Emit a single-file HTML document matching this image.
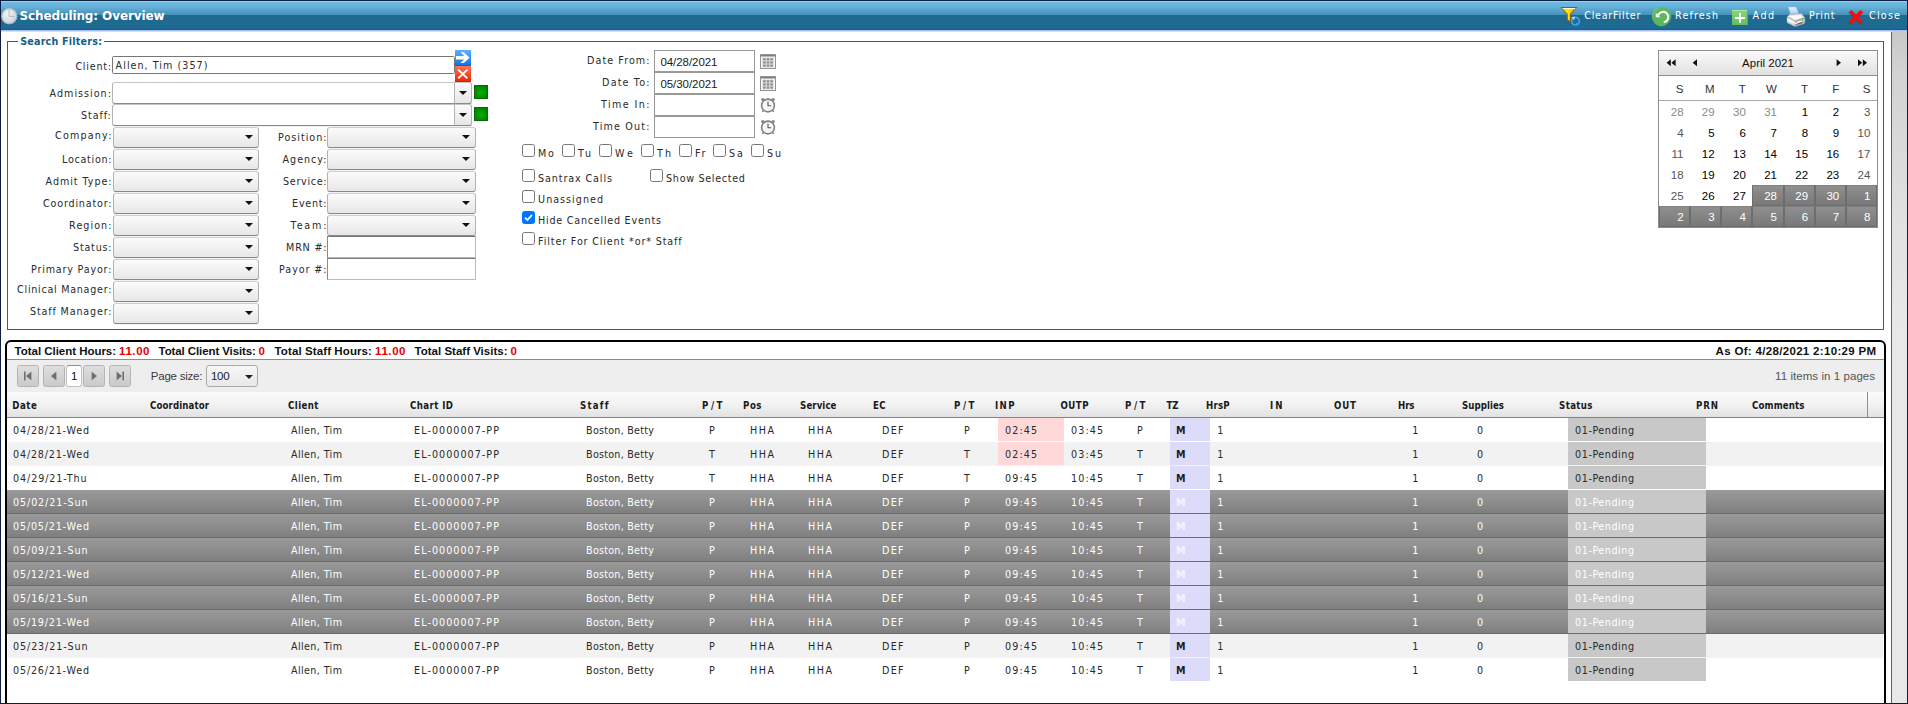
<!DOCTYPE html>
<html lang="en"><head><meta charset="utf-8"><title>Scheduling: Overview</title>
<style>
*{box-sizing:border-box;margin:0;padding:0}
html,body{width:1908px;height:704px;overflow:hidden;background:#fff}
body{position:relative;font-family:"DejaVu Sans", "Liberation Sans", sans-serif;font-size:10px;color:#2a2a2a}
.a{position:absolute;white-space:nowrap}
.v{font-family:"DejaVu Sans", "Liberation Sans", sans-serif}.vc{font-family:"DejaVu Sans Condensed", "DejaVu Sans", sans-serif}.s{font-family:"Liberation Sans", sans-serif}.b{font-weight:bold}
.win{left:0;top:0;width:1908px;height:704px;border:1px solid #0d1f3e;pointer-events:none;z-index:50}
.tb{left:1px;top:1px;width:1906px;height:30px;background:linear-gradient(#6cbae0 0,#68b4dc 4px,#4590b8 13px,#1e6a91 13px,#1e6a91 27px,#126087 27px,#126087 28px);border-top:1px solid #a8c6fc;border-bottom:1px solid #a8c0f8}
.fs{left:7px;top:41px;width:1877px;height:289px;border:1px solid #1b6a94}
.cb{width:13px;height:13px;border:1px solid #767676;border-radius:2.5px;background:#fff}
.cb.on{background:#0075ff;border-color:#0075ff}
.dd{height:21px;border:1px solid #b2b2b2;border-top-color:#cfcfcf;border-bottom-color:#888;border-radius:3px;background:linear-gradient(#fbfbfb,#e7e7e7);box-shadow:0 1px 0 rgba(0,0,0,.05)}
.dd i,.ar{position:absolute;width:0;height:0;border-left:4px solid transparent;border-right:4px solid transparent;border-top:4px solid #111}
.in{border:1px solid #8f8f8f;background:#fff}
</style></head>
<body>
<div class="a tb"></div>
<div class="a" style="left:1px;top:31px;width:1891px;height:1px;background:#dedede"></div>
<svg class="a" style="left:1px;top:8px" width="17" height="17" viewBox="0 0 17 17"><defs><radialGradient id="ck" cx=".4" cy=".35" r=".75"><stop offset="0" stop-color="#f4f6f8"/><stop offset=".7" stop-color="#d3d9de"/><stop offset="1" stop-color="#9aa3ab"/></radialGradient></defs><circle cx="8.3" cy="8.3" r="8" fill="url(#ck)"/><circle cx="8.3" cy="8.3" r="7.5" fill="none" stroke="#a9b1b8" stroke-width=".9"/><path d="M8.1 2.2V8.4H13.6" stroke="#9aa4ac" stroke-width=".9" fill="none" opacity=".8"/></svg>
<div class="a v b" style="top:9px;font-size:12px;line-height:14px;letter-spacing:-0.11px;left:19.5px;color:#fff;">Scheduling: Overview</div>
<div class="a fs"></div>
<div class="a" style="left:18px;top:38px;width:86px;height:8px;background:#fff"></div>
<div class="a v b" style="top:36px;font-size:9.6px;line-height:11px;letter-spacing:0.20px;left:20.2px;color:#12608a;">Search Filters:</div>
<svg class="a" style="left:1560px;top:6px" width="22" height="22" viewBox="0 0 22 22">
<defs><linearGradient id="fn" x1="0" y1="0" x2="1" y2="0"><stop offset="0" stop-color="#ffd800"/><stop offset=".45" stop-color="#ffe600"/><stop offset="1" stop-color="#ff8e0a"/></linearGradient></defs>
<path d="M1.2 1.5H16.8L10.4 8V15.8L7.2 13.4V8Z" fill="url(#fn)" stroke="#8c4c00" stroke-width=".9" stroke-linejoin="round"/>
<path d="M2.6 2.6H15.4" stroke="#fff" stroke-width=".9"/>
<circle cx="15.5" cy="15.2" r="3.8" fill="none" stroke="#4aa0ea" stroke-width="1.7"/>
<path d="M11 11.6l3.8-1-.6 3.6z" fill="#a6dcff"/><path d="M19.6 18.8l-3.8 1 .4-3.6z" fill="#1e9cff"/>
</svg>
<div class="a v" style="top:10px;font-size:9.6px;line-height:11px;letter-spacing:0.73px;left:1584.3px;color:#fff;">ClearFilter</div>
<svg class="a" style="left:1651px;top:6px" width="21" height="21" viewBox="0 0 21 21">
<defs><linearGradient id="rf" x1="0" y1="0" x2="1" y2="1"><stop offset="0" stop-color="#8fdc88"/><stop offset=".3" stop-color="#5cb85c"/><stop offset=".75" stop-color="#58b458"/><stop offset="1" stop-color="#2f742f"/></linearGradient></defs>
<circle cx="10.6" cy="10.7" r="9.2" fill="#5cb85c" stroke="url(#rf)" stroke-width="1.1"/>
<path d="M7.6 8.4A5.2 5.2 0 1 1 13.6 16" fill="none" stroke="#fff" stroke-width="2.1" stroke-linecap="round"/>
<path d="M4.8 6.8V11.2H9.4Z" fill="#fff"/>
</svg>
<div class="a v" style="top:10px;font-size:9.6px;line-height:11px;letter-spacing:1.11px;left:1675.1px;color:#fff;">Refresh</div>
<svg class="a" style="left:1731px;top:9px" width="18" height="18" viewBox="0 0 18 18">
<defs><linearGradient id="ad" x1="0" y1="0" x2="0" y2="1"><stop offset="0" stop-color="#8cd483"/><stop offset="1" stop-color="#66bb5e"/></linearGradient></defs>
<rect x="1" y="1" width="16" height="15" fill="url(#ad)"/><path d="M1 1.4H17" stroke="#b4f0a8" stroke-width=".8"/><path d="M16.6 1V16" stroke="#4f9f42" stroke-width=".8"/>
<path d="M9 4.1V13.9M4.1 9H13.9" stroke="#fff" stroke-width="1.9"/>
</svg>
<div class="a v" style="top:10px;font-size:9.6px;line-height:11px;letter-spacing:1.41px;left:1752.6px;color:#fff;">Add</div>
<svg class="a" style="left:1786px;top:5px" width="20" height="23" viewBox="0 0 20 23">
<defs><linearGradient id="pp" x1="0" y1="0" x2="0" y2="1"><stop offset="0" stop-color="#f2f1ff"/><stop offset="1" stop-color="#a9c9ff"/></linearGradient>
<linearGradient id="pf" x1="0" y1="0" x2="0" y2="1"><stop offset="0" stop-color="#fafafa"/><stop offset="1" stop-color="#cfcfcf"/></linearGradient></defs>
<path d="M2.3 2H10.1L12.8 8.6L4.4 9.2Z" fill="url(#pp)" stroke="#9fb4dd" stroke-width=".5"/>
<path d="M1 12L3.6 9.4L15.4 8.7L18.8 12.6L9.4 16.2Z" fill="#e6e6e6" stroke="#a9a9a9" stroke-width=".5"/>
<path d="M3.2 11.2L14.6 10.2L16.4 12.2L9.2 14.6Z" fill="#fbfbfb"/>
<path d="M1 12L9.4 16.2L9.2 21.8L1 17.6Z" fill="url(#pf)" stroke="#9b9b9b" stroke-width=".5"/>
<path d="M9.4 16.2L18.8 12.6V18.4L9.2 21.8Z" fill="#c4c4c4" stroke="#8e8e8e" stroke-width=".5"/>
<path d="M1.2 14.4L9.3 18.4L18.6 15" fill="none" stroke="#fff" stroke-width="1.1" opacity=".9"/>
<path d="M10.6 19.6L16.6 17.4" stroke="#555" stroke-width="1.1"/>
<path d="M9.6 20.6L12.2 19.7" stroke="#7f8fe0" stroke-width="1"/>
<circle cx="16.7" cy="15.2" r=".9" fill="#5fc03c"/>
</svg>
<div class="a v" style="top:10px;font-size:9.6px;line-height:11px;letter-spacing:0.83px;left:1809.1px;color:#fff;">Print</div>
<svg class="a" style="left:1847px;top:9px" width="18" height="17" viewBox="0 0 18 17">
<path d="M3.2 2.05L14.9 13.75M14.9 2.05L3.2 13.75" stroke="#8a0a0a" stroke-width="3.4" opacity=".55" transform="translate(-.35 .5)"/>
<path d="M3.2 2.05L14.9 13.75M14.9 2.05L3.2 13.75" stroke="#ff0a0a" stroke-width="3.3"/>
</svg>
<div class="a v" style="top:10px;font-size:9.6px;line-height:11px;letter-spacing:1.19px;left:1869.1px;color:#fff;">Close</div>
<div class="a" style="left:1892px;top:31px;width:15px;height:672px;background:linear-gradient(#c8c8c8,#d2d2d2 40px,#e2e2e2 200px,#e8e8e8 300px)"></div>
<div class="a" style="left:1891px;top:32px;width:1px;height:671px;background:#2a7198"></div>
<div class="a v" style="top:61px;font-size:9.6px;line-height:11px;letter-spacing:0.77px;left:75.4px;">Client:</div>
<div class="a v" style="top:88px;font-size:9.6px;line-height:11px;letter-spacing:1.00px;left:49.6px;">Admission:</div>
<div class="a v" style="top:110px;font-size:9.6px;line-height:11px;letter-spacing:0.86px;left:81.1px;">Staff:</div>
<div class="a v" style="top:130px;font-size:9.6px;line-height:11px;letter-spacing:1.17px;left:55.1px;">Company:</div>
<div class="a v" style="top:154px;font-size:9.6px;line-height:11px;letter-spacing:0.70px;left:62.1px;">Location:</div>
<div class="a v" style="top:176px;font-size:9.6px;line-height:11px;letter-spacing:0.93px;left:45.6px;">Admit Type:</div>
<div class="a v" style="top:198px;font-size:9.6px;line-height:11px;letter-spacing:0.80px;left:43.1px;">Coordinator:</div>
<div class="a v" style="top:220px;font-size:9.6px;line-height:11px;letter-spacing:1.05px;left:69.1px;">Region:</div>
<div class="a v" style="top:242px;font-size:9.6px;line-height:11px;letter-spacing:0.76px;left:73.1px;">Status:</div>
<div class="a v" style="top:264px;font-size:9.6px;line-height:11px;letter-spacing:0.80px;left:31.1px;">Primary Payor:</div>
<div class="a v" style="top:284px;font-size:9.6px;line-height:11px;letter-spacing:0.72px;left:17.1px;">Clinical Manager:</div>
<div class="a v" style="top:306px;font-size:9.6px;line-height:11px;letter-spacing:0.83px;left:30.1px;">Staff Manager:</div>
<div class="a v" style="top:132px;font-size:9.6px;line-height:11px;letter-spacing:0.97px;left:278.1px;">Position:</div>
<div class="a v" style="top:154px;font-size:9.6px;line-height:11px;letter-spacing:0.96px;left:282.6px;">Agency:</div>
<div class="a v" style="top:176px;font-size:9.6px;line-height:11px;letter-spacing:0.67px;left:283.1px;">Service:</div>
<div class="a v" style="top:198px;font-size:9.6px;line-height:11px;letter-spacing:0.73px;left:292.1px;">Event:</div>
<div class="a v" style="top:220px;font-size:9.6px;line-height:11px;letter-spacing:1.82px;left:290.6px;">Team:</div>
<div class="a v" style="top:242px;font-size:9.6px;line-height:11px;letter-spacing:0.79px;left:286.1px;">MRN #:</div>
<div class="a v" style="top:264px;font-size:9.6px;line-height:11px;letter-spacing:0.90px;left:279.1px;">Payor #:</div>
<div class="a in" style="left:112px;top:56px;width:343px;height:18px;border-color:#767676;border-radius:1.5px"></div>
<div class="a v" style="top:60px;font-size:9.6px;line-height:11px;letter-spacing:1.03px;left:115.6px;">Allen, Tim (357)</div>
<svg class="a" style="left:455px;top:50px" width="16" height="32" viewBox="0 0 16 32">
<defs><linearGradient id="bl" x1="0" y1="0" x2="0" y2="1"><stop offset="0" stop-color="#5cb0ff"/><stop offset="1" stop-color="#0e70e2"/></linearGradient>
<linearGradient id="rd" x1="0" y1="0" x2="0" y2="1"><stop offset="0" stop-color="#ff7354"/><stop offset="1" stop-color="#ea2406"/></linearGradient></defs>
<rect width="16" height="16" fill="url(#bl)"/><path d="M0 15.6H16" stroke="#0b57be" stroke-width=".8"/><path d="M.9 6H9.2L5.7 2.2H8.8L14.6 7.7L8.8 12.9H5.4L9.2 9.4H.9Z" fill="#fff"/>
<rect y="16" width="16" height="16" fill="url(#rd)"/><path d="M3.2 19.6L12.4 28.4M12.4 19.6L3.2 28.4" stroke="#fff" stroke-width="1.9"/><path d="M0 31.6H16" stroke="#d01c00" stroke-width=".8"/>
</svg>
<div class="a" style="left:112px;top:82px;width:360px;height:22px;border:1px solid #b4b4b4;border-top-color:#c4c4c4;border-bottom-color:#8a8a8a;border-radius:3px;background:#fff;box-shadow:0 1px 0 rgba(0,0,0,.06)"></div>
<div class="a" style="left:454px;top:82px;width:18px;height:22px;border:1px solid #b4b4b4;border-top-color:#c4c4c4;border-bottom-color:#8a8a8a;border-radius:0 3px 3px 0;background:linear-gradient(#fbfbfb,#e6e6e6)"><i class="ar" style="left:4px;top:8px"></i></div>
<div class="a" style="left:112px;top:104px;width:360px;height:22px;border:1px solid #b4b4b4;border-top-color:#c4c4c4;border-bottom-color:#8a8a8a;border-radius:3px;background:#fff;box-shadow:0 1px 0 rgba(0,0,0,.06)"></div>
<div class="a" style="left:454px;top:104px;width:18px;height:22px;border:1px solid #b4b4b4;border-top-color:#c4c4c4;border-bottom-color:#8a8a8a;border-radius:0 3px 3px 0;background:linear-gradient(#fbfbfb,#e6e6e6)"><i class="ar" style="left:4px;top:8px"></i></div>
<div class="a" style="left:474px;top:85px;width:14px;height:14px;border:1px solid #0a6a0a;background:radial-gradient(circle at 50% 55%,#0aae0a,#008a00 70%,#007c00)"></div>
<div class="a" style="left:474px;top:107px;width:14px;height:14px;border:1px solid #0a6a0a;background:radial-gradient(circle at 50% 55%,#0aae0a,#008a00 70%,#007c00)"></div>
<div class="a dd" style="left:113px;top:127px;width:146px;height:21px"><i style="right:5px;top:7px"></i></div>
<div class="a dd" style="left:113px;top:149px;width:146px;height:21px"><i style="right:5px;top:7px"></i></div>
<div class="a dd" style="left:113px;top:171px;width:146px;height:21px"><i style="right:5px;top:7px"></i></div>
<div class="a dd" style="left:113px;top:193px;width:146px;height:21px"><i style="right:5px;top:7px"></i></div>
<div class="a dd" style="left:113px;top:215px;width:146px;height:21px"><i style="right:5px;top:7px"></i></div>
<div class="a dd" style="left:113px;top:237px;width:146px;height:21px"><i style="right:5px;top:7px"></i></div>
<div class="a dd" style="left:113px;top:259px;width:146px;height:21px"><i style="right:5px;top:7px"></i></div>
<div class="a dd" style="left:113px;top:281px;width:146px;height:21px"><i style="right:5px;top:7px"></i></div>
<div class="a dd" style="left:113px;top:303px;width:146px;height:21px"><i style="right:5px;top:7px"></i></div>
<div class="a dd" style="left:327px;top:127px;width:149px;height:21px"><i style="right:5px;top:7px"></i></div>
<div class="a dd" style="left:327px;top:149px;width:149px;height:21px"><i style="right:5px;top:7px"></i></div>
<div class="a dd" style="left:327px;top:171px;width:149px;height:21px"><i style="right:5px;top:7px"></i></div>
<div class="a dd" style="left:327px;top:193px;width:149px;height:21px"><i style="right:5px;top:7px"></i></div>
<div class="a dd" style="left:327px;top:215px;width:149px;height:21px"><i style="right:5px;top:7px"></i></div>
<div class="a" style="left:327px;top:236px;width:149px;height:22px;background:#fff;border:1px solid #b9b9b9;border-top-color:#7a7a7a;border-left-color:#8a8a8a"></div>
<div class="a" style="left:327px;top:258px;width:149px;height:22px;background:#fff;border:1px solid #b9b9b9;border-top-color:#7a7a7a;border-left-color:#8a8a8a"></div>
<div class="a v" style="top:55px;font-size:9.6px;line-height:11px;letter-spacing:1.04px;left:587.1px;">Date From:</div>
<div class="a v" style="top:77px;font-size:9.6px;line-height:11px;letter-spacing:1.15px;left:602.1px;">Date To:</div>
<div class="a v" style="top:99px;font-size:9.6px;line-height:11px;letter-spacing:1.39px;left:601.1px;">Time In:</div>
<div class="a v" style="top:121px;font-size:9.6px;line-height:11px;letter-spacing:1.15px;left:593.1px;">Time Out:</div>
<div class="a in" style="left:654px;top:50px;width:101px;height:22px;border-color:#999"></div>
<div class="a in" style="left:654px;top:72px;width:101px;height:22px;border-color:#999"></div>
<div class="a in" style="left:654px;top:94px;width:101px;height:22px;border-color:#999"></div>
<div class="a in" style="left:654px;top:116px;width:101px;height:22px;border-color:#999"></div>
<div class="a s" style="top:56px;font-size:11.5px;line-height:12px;letter-spacing:-0.05px;left:660.4px;color:#1a1a1a;">04/28/2021</div>
<div class="a s" style="top:78px;font-size:11.5px;line-height:12px;letter-spacing:-0.05px;left:660.4px;color:#1a1a1a;">05/30/2021</div>
<svg class="a" style="left:760px;top:54px" width="16" height="15" viewBox="0 0 16 15">
<rect x=".5" y=".5" width="15" height="14" fill="#f6f6f6" stroke="#939393"/><rect x="1" y="1" width="14" height="1.5" fill="#7e7e7e"/>
<rect x="2.4" y="3.6" width="11.2" height="9.8" fill="#d9d9d9"/><g fill="#8f8f8f"><rect x="3.1" y="4.2" width="2.5" height="2.1"/><rect x="6.75" y="4.2" width="2.5" height="2.1"/><rect x="10.4" y="4.2" width="2.5" height="2.1"/><rect x="3.1" y="7.4" width="2.5" height="2.1"/><rect x="6.75" y="7.4" width="2.5" height="2.1"/><rect x="10.4" y="7.4" width="2.5" height="2.1"/><rect x="3.1" y="10.6" width="2.5" height="2.1"/><rect x="6.75" y="10.6" width="2.5" height="2.1"/><rect x="10.4" y="10.6" width="2.5" height="2.1"/></g></svg>
<svg class="a" style="left:760px;top:76px" width="16" height="15" viewBox="0 0 16 15">
<rect x=".5" y=".5" width="15" height="14" fill="#f6f6f6" stroke="#939393"/><rect x="1" y="1" width="14" height="1.5" fill="#7e7e7e"/>
<rect x="2.4" y="3.6" width="11.2" height="9.8" fill="#d9d9d9"/><g fill="#8f8f8f"><rect x="3.1" y="4.2" width="2.5" height="2.1"/><rect x="6.75" y="4.2" width="2.5" height="2.1"/><rect x="10.4" y="4.2" width="2.5" height="2.1"/><rect x="3.1" y="7.4" width="2.5" height="2.1"/><rect x="6.75" y="7.4" width="2.5" height="2.1"/><rect x="10.4" y="7.4" width="2.5" height="2.1"/><rect x="3.1" y="10.6" width="2.5" height="2.1"/><rect x="6.75" y="10.6" width="2.5" height="2.1"/><rect x="10.4" y="10.6" width="2.5" height="2.1"/></g></svg>
<svg class="a" style="left:760px;top:97px" width="16" height="16" viewBox="0 0 16 16">
<circle cx="2.8" cy="2.6" r="1.7" fill="#8a8a8a"/><circle cx="13.2" cy="2.6" r="1.7" fill="#8a8a8a"/>
<path d="M3.6 13L2.4 15M12.4 13L13.6 15" stroke="#7a7a7a" stroke-width="1.4"/>
<circle cx="8" cy="8.5" r="6.4" fill="#f7f7f7" stroke="#808080" stroke-width="1.6"/>
<path d="M8 4.6V8.8H11.2" stroke="#555" stroke-width="1.1" fill="none"/></svg>
<svg class="a" style="left:760px;top:119px" width="16" height="16" viewBox="0 0 16 16">
<circle cx="2.8" cy="2.6" r="1.7" fill="#8a8a8a"/><circle cx="13.2" cy="2.6" r="1.7" fill="#8a8a8a"/>
<path d="M3.6 13L2.4 15M12.4 13L13.6 15" stroke="#7a7a7a" stroke-width="1.4"/>
<circle cx="8" cy="8.5" r="6.4" fill="#f7f7f7" stroke="#808080" stroke-width="1.6"/>
<path d="M8 4.6V8.8H11.2" stroke="#555" stroke-width="1.1" fill="none"/></svg>
<div class="a cb" style="left:522px;top:144px"></div>
<div class="a v" style="top:147.5px;font-size:9.6px;line-height:11px;letter-spacing:1.74px;left:538.1px;">Mo</div>
<div class="a cb" style="left:562px;top:144px"></div>
<div class="a v" style="top:147.5px;font-size:9.6px;line-height:11px;letter-spacing:2.41px;left:578.1px;">Tu</div>
<div class="a cb" style="left:599px;top:144px"></div>
<div class="a v" style="top:147.5px;font-size:9.6px;line-height:11px;letter-spacing:3.06px;left:615.1px;">We</div>
<div class="a cb" style="left:641px;top:144px"></div>
<div class="a v" style="top:147.5px;font-size:9.6px;line-height:11px;letter-spacing:1.95px;left:657.1px;">Th</div>
<div class="a cb" style="left:679px;top:144px"></div>
<div class="a v" style="top:147.5px;font-size:9.6px;line-height:11px;letter-spacing:1.63px;left:695.1px;">Fr</div>
<div class="a cb" style="left:713px;top:144px"></div>
<div class="a v" style="top:147.5px;font-size:9.6px;line-height:11px;letter-spacing:1.92px;left:729.1px;">Sa</div>
<div class="a cb" style="left:751px;top:144px"></div>
<div class="a v" style="top:147.5px;font-size:9.6px;line-height:11px;letter-spacing:1.72px;left:767.1px;">Su</div>
<div class="a cb" style="left:522px;top:169px"></div>
<div class="a v" style="top:173px;font-size:9.6px;line-height:11px;letter-spacing:0.88px;left:538.1px;">Santrax Calls</div>
<div class="a cb" style="left:650px;top:169px"></div>
<div class="a v" style="top:173px;font-size:9.6px;line-height:11px;letter-spacing:0.69px;left:666.1px;">Show Selected</div>
<div class="a cb" style="left:522px;top:190px"></div>
<div class="a v" style="top:194px;font-size:9.6px;line-height:11px;letter-spacing:1.01px;left:538.1px;">Unassigned</div>
<div class="a cb on" style="left:522px;top:211px"><svg width="11" height="11" viewBox="0 0 11 11" style="display:block"><path d="M2 5.6L4.4 8L9 2.8" fill="none" stroke="#fff" stroke-width="1.8"/></svg></div>
<div class="a v" style="top:215px;font-size:9.6px;line-height:11px;letter-spacing:0.76px;left:538.1px;">Hide Cancelled Events</div>
<div class="a cb" style="left:522px;top:232px"></div>
<div class="a v" style="top:236px;font-size:9.6px;line-height:11px;letter-spacing:0.85px;left:538.1px;">Filter For Client *or* Staff</div>
<div class="a" style="left:1658px;top:50px;width:220px;height:178px;border:1px solid #8c8c8c;background:#fff"></div>
<div class="a" style="left:1658px;top:50px;width:220px;height:26px;border:1px solid #8f8f8f;background:linear-gradient(#fafafa,#e1e1e1)"></div>
<div class="a s" style="left:1658px;top:56px;width:220px;text-align:center;font-size:11.5px;line-height:14px;color:#111">April 2021</div>
<svg class="a" style="left:1658px;top:50px" width="220" height="26" viewBox="0 0 220 26"><g fill="#111">
<path d="M12.8 9.3V16.3L8.6 12.8ZM17.6 9.3V16.3L13.4 12.8Z"/><path d="M39 9.3V16.3L34.6 12.8Z"/>
<path d="M178.6 9.3V16.3L183 12.8Z"/><path d="M200 9.3V16.3L204.2 12.8ZM204.8 9.3V16.3L209 12.8Z"/></g></svg>
<div class="a" style="left:1659px;top:100px;width:218px;height:1px;background:#a8a8a8"></div>
<div class="a s" style="left:1659.00px;top:78px;width:31.14px;height:21px;text-align:right;padding-right:6.6px;font-size:11.5px;line-height:22px;color:#333;">S</div>
<div class="a s" style="left:1690.14px;top:78px;width:31.14px;height:21px;text-align:right;padding-right:6.6px;font-size:11.5px;line-height:22px;color:#333;">M</div>
<div class="a s" style="left:1721.29px;top:78px;width:31.14px;height:21px;text-align:right;padding-right:6.6px;font-size:11.5px;line-height:22px;color:#333;">T</div>
<div class="a s" style="left:1752.43px;top:78px;width:31.14px;height:21px;text-align:right;padding-right:6.6px;font-size:11.5px;line-height:22px;color:#333;">W</div>
<div class="a s" style="left:1783.57px;top:78px;width:31.14px;height:21px;text-align:right;padding-right:6.6px;font-size:11.5px;line-height:22px;color:#333;">T</div>
<div class="a s" style="left:1814.71px;top:78px;width:31.14px;height:21px;text-align:right;padding-right:6.6px;font-size:11.5px;line-height:22px;color:#333;">F</div>
<div class="a s" style="left:1845.86px;top:78px;width:31.14px;height:21px;text-align:right;padding-right:6.6px;font-size:11.5px;line-height:22px;color:#333;">S</div>
<div class="a s" style="left:1659.00px;top:101px;width:31.14px;height:21px;text-align:right;padding-right:6.6px;font-size:11.5px;line-height:22px;color:#8a8a8a;">28</div>
<div class="a s" style="left:1690.14px;top:101px;width:31.14px;height:21px;text-align:right;padding-right:6.6px;font-size:11.5px;line-height:22px;color:#8a8a8a;">29</div>
<div class="a s" style="left:1721.29px;top:101px;width:31.14px;height:21px;text-align:right;padding-right:6.6px;font-size:11.5px;line-height:22px;color:#8a8a8a;">30</div>
<div class="a s" style="left:1752.43px;top:101px;width:31.14px;height:21px;text-align:right;padding-right:6.6px;font-size:11.5px;line-height:22px;color:#8a8a8a;">31</div>
<div class="a s" style="left:1783.57px;top:101px;width:31.14px;height:21px;text-align:right;padding-right:6.6px;font-size:11.5px;line-height:22px;color:#000;">1</div>
<div class="a s" style="left:1814.71px;top:101px;width:31.14px;height:21px;text-align:right;padding-right:6.6px;font-size:11.5px;line-height:22px;color:#000;">2</div>
<div class="a s" style="left:1845.86px;top:101px;width:31.14px;height:21px;text-align:right;padding-right:6.6px;font-size:11.5px;line-height:22px;color:#555;">3</div>
<div class="a s" style="left:1659.00px;top:122px;width:31.14px;height:21px;text-align:right;padding-right:6.6px;font-size:11.5px;line-height:22px;color:#555;">4</div>
<div class="a s" style="left:1690.14px;top:122px;width:31.14px;height:21px;text-align:right;padding-right:6.6px;font-size:11.5px;line-height:22px;color:#000;">5</div>
<div class="a s" style="left:1721.29px;top:122px;width:31.14px;height:21px;text-align:right;padding-right:6.6px;font-size:11.5px;line-height:22px;color:#000;">6</div>
<div class="a s" style="left:1752.43px;top:122px;width:31.14px;height:21px;text-align:right;padding-right:6.6px;font-size:11.5px;line-height:22px;color:#000;">7</div>
<div class="a s" style="left:1783.57px;top:122px;width:31.14px;height:21px;text-align:right;padding-right:6.6px;font-size:11.5px;line-height:22px;color:#000;">8</div>
<div class="a s" style="left:1814.71px;top:122px;width:31.14px;height:21px;text-align:right;padding-right:6.6px;font-size:11.5px;line-height:22px;color:#000;">9</div>
<div class="a s" style="left:1845.86px;top:122px;width:31.14px;height:21px;text-align:right;padding-right:6.6px;font-size:11.5px;line-height:22px;color:#555;">10</div>
<div class="a s" style="left:1659.00px;top:143px;width:31.14px;height:21px;text-align:right;padding-right:6.6px;font-size:11.5px;line-height:22px;color:#555;">11</div>
<div class="a s" style="left:1690.14px;top:143px;width:31.14px;height:21px;text-align:right;padding-right:6.6px;font-size:11.5px;line-height:22px;color:#000;">12</div>
<div class="a s" style="left:1721.29px;top:143px;width:31.14px;height:21px;text-align:right;padding-right:6.6px;font-size:11.5px;line-height:22px;color:#000;">13</div>
<div class="a s" style="left:1752.43px;top:143px;width:31.14px;height:21px;text-align:right;padding-right:6.6px;font-size:11.5px;line-height:22px;color:#000;">14</div>
<div class="a s" style="left:1783.57px;top:143px;width:31.14px;height:21px;text-align:right;padding-right:6.6px;font-size:11.5px;line-height:22px;color:#000;">15</div>
<div class="a s" style="left:1814.71px;top:143px;width:31.14px;height:21px;text-align:right;padding-right:6.6px;font-size:11.5px;line-height:22px;color:#000;">16</div>
<div class="a s" style="left:1845.86px;top:143px;width:31.14px;height:21px;text-align:right;padding-right:6.6px;font-size:11.5px;line-height:22px;color:#555;">17</div>
<div class="a s" style="left:1659.00px;top:164px;width:31.14px;height:21px;text-align:right;padding-right:6.6px;font-size:11.5px;line-height:22px;color:#555;">18</div>
<div class="a s" style="left:1690.14px;top:164px;width:31.14px;height:21px;text-align:right;padding-right:6.6px;font-size:11.5px;line-height:22px;color:#000;">19</div>
<div class="a s" style="left:1721.29px;top:164px;width:31.14px;height:21px;text-align:right;padding-right:6.6px;font-size:11.5px;line-height:22px;color:#000;">20</div>
<div class="a s" style="left:1752.43px;top:164px;width:31.14px;height:21px;text-align:right;padding-right:6.6px;font-size:11.5px;line-height:22px;color:#000;">21</div>
<div class="a s" style="left:1783.57px;top:164px;width:31.14px;height:21px;text-align:right;padding-right:6.6px;font-size:11.5px;line-height:22px;color:#000;">22</div>
<div class="a s" style="left:1814.71px;top:164px;width:31.14px;height:21px;text-align:right;padding-right:6.6px;font-size:11.5px;line-height:22px;color:#000;">23</div>
<div class="a s" style="left:1845.86px;top:164px;width:31.14px;height:21px;text-align:right;padding-right:6.6px;font-size:11.5px;line-height:22px;color:#555;">24</div>
<div class="a s" style="left:1659.00px;top:185px;width:31.14px;height:21px;text-align:right;padding-right:6.6px;font-size:11.5px;line-height:22px;color:#555;">25</div>
<div class="a s" style="left:1690.14px;top:185px;width:31.14px;height:21px;text-align:right;padding-right:6.6px;font-size:11.5px;line-height:22px;color:#000;">26</div>
<div class="a s" style="left:1721.29px;top:185px;width:31.14px;height:21px;text-align:right;padding-right:6.6px;font-size:11.5px;line-height:22px;color:#000;">27</div>
<div class="a s" style="left:1752.43px;top:185px;width:31.14px;height:21px;text-align:right;padding-right:6.6px;font-size:11.5px;line-height:22px;color:#fff;background:linear-gradient(#8f8f8f,#787878);border:1px solid #6d6d6d;border-top-color:#808080;padding-right:5.6px;line-height:20px;">28</div>
<div class="a s" style="left:1783.57px;top:185px;width:31.14px;height:21px;text-align:right;padding-right:6.6px;font-size:11.5px;line-height:22px;color:#fff;background:linear-gradient(#8f8f8f,#787878);border:1px solid #6d6d6d;border-top-color:#808080;padding-right:5.6px;line-height:20px;">29</div>
<div class="a s" style="left:1814.71px;top:185px;width:31.14px;height:21px;text-align:right;padding-right:6.6px;font-size:11.5px;line-height:22px;color:#fff;background:linear-gradient(#8f8f8f,#787878);border:1px solid #6d6d6d;border-top-color:#808080;padding-right:5.6px;line-height:20px;">30</div>
<div class="a s" style="left:1845.86px;top:185px;width:31.14px;height:21px;text-align:right;padding-right:6.6px;font-size:11.5px;line-height:22px;color:#fff;background:linear-gradient(#8f8f8f,#787878);border:1px solid #6d6d6d;border-top-color:#808080;padding-right:5.6px;line-height:20px;">1</div>
<div class="a s" style="left:1659.00px;top:206px;width:31.14px;height:21px;text-align:right;padding-right:6.6px;font-size:11.5px;line-height:22px;color:#fff;background:linear-gradient(#8f8f8f,#787878);border:1px solid #6d6d6d;border-top-color:#808080;padding-right:5.6px;line-height:20px;">2</div>
<div class="a s" style="left:1690.14px;top:206px;width:31.14px;height:21px;text-align:right;padding-right:6.6px;font-size:11.5px;line-height:22px;color:#fff;background:linear-gradient(#8f8f8f,#787878);border:1px solid #6d6d6d;border-top-color:#808080;padding-right:5.6px;line-height:20px;">3</div>
<div class="a s" style="left:1721.29px;top:206px;width:31.14px;height:21px;text-align:right;padding-right:6.6px;font-size:11.5px;line-height:22px;color:#fff;background:linear-gradient(#8f8f8f,#787878);border:1px solid #6d6d6d;border-top-color:#808080;padding-right:5.6px;line-height:20px;">4</div>
<div class="a s" style="left:1752.43px;top:206px;width:31.14px;height:21px;text-align:right;padding-right:6.6px;font-size:11.5px;line-height:22px;color:#fff;background:linear-gradient(#8f8f8f,#787878);border:1px solid #6d6d6d;border-top-color:#808080;padding-right:5.6px;line-height:20px;">5</div>
<div class="a s" style="left:1783.57px;top:206px;width:31.14px;height:21px;text-align:right;padding-right:6.6px;font-size:11.5px;line-height:22px;color:#fff;background:linear-gradient(#8f8f8f,#787878);border:1px solid #6d6d6d;border-top-color:#808080;padding-right:5.6px;line-height:20px;">6</div>
<div class="a s" style="left:1814.71px;top:206px;width:31.14px;height:21px;text-align:right;padding-right:6.6px;font-size:11.5px;line-height:22px;color:#fff;background:linear-gradient(#8f8f8f,#787878);border:1px solid #6d6d6d;border-top-color:#808080;padding-right:5.6px;line-height:20px;">7</div>
<div class="a s" style="left:1845.86px;top:206px;width:31.14px;height:21px;text-align:right;padding-right:6.6px;font-size:11.5px;line-height:22px;color:#fff;background:linear-gradient(#8f8f8f,#787878);border:1px solid #6d6d6d;border-top-color:#808080;padding-right:5.6px;line-height:20px;">8</div>
<div class="a" style="left:5px;top:340px;width:1881px;height:380px;border:2px solid #000;border-radius:6px 6px 0 0;background:#fff"></div>
<div class="a s b" style="top:345px;font-size:11.5px;line-height:12px;letter-spacing:-0.03px;left:14.6px;color:#111;">Total Client Hours:</div>
<div class="a s b" style="top:345px;font-size:11.5px;line-height:12px;letter-spacing:0.56px;left:119.1px;color:#e00000;">11.00</div>
<div class="a s b" style="top:345px;font-size:11.5px;line-height:12px;letter-spacing:-0.10px;left:158.6px;color:#111;">Total Client Visits:</div>
<div class="a s b" style="top:345px;font-size:11.5px;line-height:12px;left:258.6px;color:#e00000;">0</div>
<div class="a s b" style="top:345px;font-size:11.5px;line-height:12px;letter-spacing:0.10px;left:274.6px;color:#111;">Total Staff Hours:</div>
<div class="a s b" style="top:345px;font-size:11.5px;line-height:12px;letter-spacing:0.56px;left:375.1px;color:#e00000;">11.00</div>
<div class="a s b" style="top:345px;font-size:11.5px;line-height:12px;left:414.6px;color:#111;">Total Staff Visits:</div>
<div class="a s b" style="top:345px;font-size:11.5px;line-height:12px;left:510.6px;color:#e00000;">0</div>
<div class="a s b" style="top:345px;font-size:11.5px;line-height:12px;letter-spacing:0.32px;left:1715.6px;color:#111;">As Of: 4/28/2021 2:10:29 PM</div>
<div class="a" style="left:7px;top:359px;width:1877px;height:1px;background:#8c8c8c"></div>
<div class="a" style="left:7px;top:360px;width:1877px;height:32px;background:#eee"></div>
<div class="a" style="left:17px;top:365px;width:22px;height:22px;border:1px solid #b5b5b5;border-radius:2.5px;background:linear-gradient(#dedede,#cacaca)"><svg width="20" height="20" viewBox="0 0 20 20" style="display:block"><g fill="#707070"><rect x="6" y="5.6" width="1.6" height="8.8"/><path d="M13.4 5.6V14.4L8 10Z"/></g></svg></div>
<div class="a" style="left:43px;top:365px;width:22px;height:22px;border:1px solid #b5b5b5;border-radius:2.5px;background:linear-gradient(#dedede,#cacaca)"><svg width="20" height="20" viewBox="0 0 20 20" style="display:block"><g fill="#707070"><path d="M12.4 5.6V14.4L7 10Z"/></g></svg></div>
<div class="a" style="left:66px;top:365px;width:16px;height:22px;border:1px solid #c2c2c2;border-top-color:#8f8f8f;border-radius:3px;background:#fff"></div>
<div class="a s" style="top:370px;font-size:11.5px;line-height:12px;left:71.1px;color:#111;">1</div>
<div class="a" style="left:83px;top:365px;width:22px;height:22px;border:1px solid #b5b5b5;border-radius:2.5px;background:linear-gradient(#dedede,#cacaca)"><svg width="20" height="20" viewBox="0 0 20 20" style="display:block"><g fill="#707070"><path d="M7.6 5.6V14.4L13 10Z"/></g></svg></div>
<div class="a" style="left:109px;top:365px;width:22px;height:22px;border:1px solid #b5b5b5;border-radius:2.5px;background:linear-gradient(#dedede,#cacaca)"><svg width="20" height="20" viewBox="0 0 20 20" style="display:block"><g fill="#707070"><path d="M6.6 5.6V14.4L12 10Z"/><rect x="12.4" y="5.6" width="1.6" height="8.8"/></g></svg></div>
<div class="a s" style="top:370px;font-size:11.5px;line-height:12px;letter-spacing:-0.24px;left:150.8px;color:#3a3a3a;">Page size:</div>
<div class="a" style="left:206px;top:365px;width:52px;height:22px;border:1px solid #ababab;border-radius:3px;background:linear-gradient(#f6f6f6,#e8e8e8)"><i class="ar" style="left:37.5px;top:8.5px;border-top-color:#222"></i></div>
<div class="a s" style="top:370px;font-size:11.5px;line-height:12px;letter-spacing:-0.19px;left:210.9px;color:#222;">100</div>
<div class="a s" style="top:370px;font-size:11.5px;line-height:12px;letter-spacing:0.06px;left:1775.1px;color:#555;">11 items in 1 pages</div>
<div class="a" style="left:7px;top:392px;width:1877px;height:26px;background:linear-gradient(#fbfbfb,#f3f3f3 45%,#e3e3e3);border-bottom:1px solid #828282"></div>
<div class="a" style="left:1867px;top:392px;width:1px;height:25px;background:#8f8f8f"></div>
<div class="a vc b" style="top:400px;font-size:9.6px;line-height:11px;letter-spacing:0.54px;left:12.2px;color:#1a1a1a;">Date</div>
<div class="a vc b" style="top:400px;font-size:9.6px;line-height:11px;letter-spacing:0.10px;left:150.1px;color:#1a1a1a;">Coordinator</div>
<div class="a vc b" style="top:400px;font-size:9.6px;line-height:11px;letter-spacing:0.40px;left:288.1px;color:#1a1a1a;">Client</div>
<div class="a vc b" style="top:400px;font-size:9.6px;line-height:11px;letter-spacing:0.40px;left:410.1px;color:#1a1a1a;">Chart ID</div>
<div class="a vc b" style="top:400px;font-size:9.6px;line-height:11px;letter-spacing:1.18px;left:580.1px;color:#1a1a1a;">Staff</div>
<div class="a vc b" style="top:400px;font-size:9.6px;line-height:11px;letter-spacing:2.51px;left:702.1px;color:#1a1a1a;">P/T</div>
<div class="a vc b" style="top:400px;font-size:9.6px;line-height:11px;letter-spacing:0.50px;left:743.1px;color:#1a1a1a;">Pos</div>
<div class="a vc b" style="top:400px;font-size:9.6px;line-height:11px;letter-spacing:0.08px;left:800.1px;color:#1a1a1a;">Service</div>
<div class="a vc b" style="top:400px;font-size:9.6px;line-height:11px;letter-spacing:0.16px;left:873.1px;color:#1a1a1a;">EC</div>
<div class="a vc b" style="top:400px;font-size:9.6px;line-height:11px;letter-spacing:2.51px;left:954.1px;color:#1a1a1a;">P/T</div>
<div class="a vc b" style="top:400px;font-size:9.6px;line-height:11px;letter-spacing:1.32px;left:995.1px;color:#1a1a1a;">INP</div>
<div class="a vc b" style="top:400px;font-size:9.6px;line-height:11px;letter-spacing:0.44px;left:1060.6px;color:#1a1a1a;">OUTP</div>
<div class="a vc b" style="top:400px;font-size:9.6px;line-height:11px;letter-spacing:2.51px;left:1125.1px;color:#1a1a1a;">P/T</div>
<div class="a vc b" style="top:400px;font-size:9.6px;line-height:11px;letter-spacing:-0.25px;left:1166.6px;color:#1a1a1a;">TZ</div>
<div class="a vc b" style="top:400px;font-size:9.6px;line-height:11px;letter-spacing:0.15px;left:1206.1px;color:#1a1a1a;">HrsP</div>
<div class="a vc b" style="top:400px;font-size:9.6px;line-height:11px;letter-spacing:1.96px;left:1270.1px;color:#1a1a1a;">IN</div>
<div class="a vc b" style="top:400px;font-size:9.6px;line-height:11px;letter-spacing:0.83px;left:1334.1px;color:#1a1a1a;">OUT</div>
<div class="a vc b" style="top:400px;font-size:9.6px;line-height:11px;letter-spacing:-0.12px;left:1398.1px;color:#1a1a1a;">Hrs</div>
<div class="a vc b" style="top:400px;font-size:9.6px;line-height:11px;letter-spacing:0.04px;left:1462.1px;color:#1a1a1a;">Supplies</div>
<div class="a vc b" style="top:400px;font-size:9.6px;line-height:11px;letter-spacing:0.36px;left:1559.1px;color:#1a1a1a;">Status</div>
<div class="a vc b" style="top:400px;font-size:9.6px;line-height:11px;letter-spacing:0.85px;left:1696.1px;color:#1a1a1a;">PRN</div>
<div class="a vc b" style="top:400px;font-size:9.6px;line-height:11px;letter-spacing:0.12px;left:1752.1px;color:#1a1a1a;">Comments</div>
<div class="a" style="left:998px;top:418px;width:66px;height:23px;background:#ffd9d9"></div>
<div class="a" style="left:1170px;top:418px;width:40px;height:23px;background:#dcdcfa"></div>
<div class="a" style="left:1568px;top:418px;width:138px;height:23px;background:#c8c8c8"></div>
<div class="a v" style="top:425px;font-size:9.6px;line-height:11px;letter-spacing:0.80px;left:13.1px;color:#2a2a2a;">04/28/21-Wed</div>
<div class="a v" style="top:425px;font-size:9.6px;line-height:11px;letter-spacing:0.37px;left:291.1px;color:#2a2a2a;">Allen, Tim</div>
<div class="a v" style="top:425px;font-size:9.6px;line-height:11px;letter-spacing:1.03px;left:414.1px;color:#2a2a2a;">EL-0000007-PP</div>
<div class="a v" style="top:425px;font-size:9.6px;line-height:11px;letter-spacing:0.24px;left:586.1px;color:#2a2a2a;">Boston, Betty</div>
<div class="a v" style="top:425px;font-size:9.6px;line-height:11px;left:709.1px;color:#2a2a2a;">P</div>
<div class="a v" style="top:425px;font-size:9.6px;line-height:11px;letter-spacing:1.45px;left:750.1px;color:#2a2a2a;">HHA</div>
<div class="a v" style="top:425px;font-size:9.6px;line-height:11px;letter-spacing:1.45px;left:808.1px;color:#2a2a2a;">HHA</div>
<div class="a v" style="top:425px;font-size:9.6px;line-height:11px;letter-spacing:1.21px;left:882.1px;color:#2a2a2a;">DEF</div>
<div class="a v" style="top:425px;font-size:9.6px;line-height:11px;left:964.1px;color:#2a2a2a;">P</div>
<div class="a v" style="top:425px;font-size:9.6px;line-height:11px;letter-spacing:1.06px;left:1005.1px;color:#2a2a2a;">02:45</div>
<div class="a v" style="top:425px;font-size:9.6px;line-height:11px;letter-spacing:1.06px;left:1071.1px;color:#2a2a2a;">03:45</div>
<div class="a v" style="top:425px;font-size:9.6px;line-height:11px;left:1137.1px;color:#2a2a2a;">P</div>
<div class="a v" style="top:425px;font-size:9.6px;line-height:11px;left:1217.3px;color:#2a2a2a;">1</div>
<div class="a v" style="top:425px;font-size:9.6px;line-height:11px;left:1412.3px;color:#2a2a2a;">1</div>
<div class="a v" style="top:425px;font-size:9.6px;line-height:11px;left:1477.1px;color:#2a2a2a;">0</div>
<div class="a v" style="top:425px;font-size:9.6px;line-height:11px;letter-spacing:0.54px;left:1575.1px;color:#2a2a2a;">01-Pending</div>
<div class="a v b" style="top:425px;font-size:9.6px;line-height:11px;left:1176.1px;color:#1c1c1c;">M</div>
<div class="a" style="left:8px;top:442px;width:1875px;height:24px;background:#f2f2f2"></div>
<div class="a" style="left:998px;top:442px;width:66px;height:23px;background:#ffd9d9"></div>
<div class="a" style="left:1170px;top:442px;width:40px;height:23px;background:#dcdcfa"></div>
<div class="a" style="left:1568px;top:442px;width:138px;height:23px;background:#c8c8c8"></div>
<div class="a v" style="top:449px;font-size:9.6px;line-height:11px;letter-spacing:0.80px;left:13.1px;color:#2a2a2a;">04/28/21-Wed</div>
<div class="a v" style="top:449px;font-size:9.6px;line-height:11px;letter-spacing:0.37px;left:291.1px;color:#2a2a2a;">Allen, Tim</div>
<div class="a v" style="top:449px;font-size:9.6px;line-height:11px;letter-spacing:1.03px;left:414.1px;color:#2a2a2a;">EL-0000007-PP</div>
<div class="a v" style="top:449px;font-size:9.6px;line-height:11px;letter-spacing:0.24px;left:586.1px;color:#2a2a2a;">Boston, Betty</div>
<div class="a v" style="top:449px;font-size:9.6px;line-height:11px;left:709.1px;color:#2a2a2a;">T</div>
<div class="a v" style="top:449px;font-size:9.6px;line-height:11px;letter-spacing:1.45px;left:750.1px;color:#2a2a2a;">HHA</div>
<div class="a v" style="top:449px;font-size:9.6px;line-height:11px;letter-spacing:1.45px;left:808.1px;color:#2a2a2a;">HHA</div>
<div class="a v" style="top:449px;font-size:9.6px;line-height:11px;letter-spacing:1.21px;left:882.1px;color:#2a2a2a;">DEF</div>
<div class="a v" style="top:449px;font-size:9.6px;line-height:11px;left:964.1px;color:#2a2a2a;">T</div>
<div class="a v" style="top:449px;font-size:9.6px;line-height:11px;letter-spacing:1.06px;left:1005.1px;color:#2a2a2a;">02:45</div>
<div class="a v" style="top:449px;font-size:9.6px;line-height:11px;letter-spacing:1.06px;left:1071.1px;color:#2a2a2a;">03:45</div>
<div class="a v" style="top:449px;font-size:9.6px;line-height:11px;left:1137.1px;color:#2a2a2a;">T</div>
<div class="a v" style="top:449px;font-size:9.6px;line-height:11px;left:1217.3px;color:#2a2a2a;">1</div>
<div class="a v" style="top:449px;font-size:9.6px;line-height:11px;left:1412.3px;color:#2a2a2a;">1</div>
<div class="a v" style="top:449px;font-size:9.6px;line-height:11px;left:1477.1px;color:#2a2a2a;">0</div>
<div class="a v" style="top:449px;font-size:9.6px;line-height:11px;letter-spacing:0.54px;left:1575.1px;color:#2a2a2a;">01-Pending</div>
<div class="a v b" style="top:449px;font-size:9.6px;line-height:11px;left:1176.1px;color:#1c1c1c;">M</div>
<div class="a" style="left:1170px;top:466px;width:40px;height:23px;background:#dcdcfa"></div>
<div class="a" style="left:1568px;top:466px;width:138px;height:23px;background:#c8c8c8"></div>
<div class="a v" style="top:473px;font-size:9.6px;line-height:11px;letter-spacing:0.88px;left:13.1px;color:#2a2a2a;">04/29/21-Thu</div>
<div class="a v" style="top:473px;font-size:9.6px;line-height:11px;letter-spacing:0.37px;left:291.1px;color:#2a2a2a;">Allen, Tim</div>
<div class="a v" style="top:473px;font-size:9.6px;line-height:11px;letter-spacing:1.03px;left:414.1px;color:#2a2a2a;">EL-0000007-PP</div>
<div class="a v" style="top:473px;font-size:9.6px;line-height:11px;letter-spacing:0.24px;left:586.1px;color:#2a2a2a;">Boston, Betty</div>
<div class="a v" style="top:473px;font-size:9.6px;line-height:11px;left:709.1px;color:#2a2a2a;">T</div>
<div class="a v" style="top:473px;font-size:9.6px;line-height:11px;letter-spacing:1.45px;left:750.1px;color:#2a2a2a;">HHA</div>
<div class="a v" style="top:473px;font-size:9.6px;line-height:11px;letter-spacing:1.45px;left:808.1px;color:#2a2a2a;">HHA</div>
<div class="a v" style="top:473px;font-size:9.6px;line-height:11px;letter-spacing:1.21px;left:882.1px;color:#2a2a2a;">DEF</div>
<div class="a v" style="top:473px;font-size:9.6px;line-height:11px;left:964.1px;color:#2a2a2a;">T</div>
<div class="a v" style="top:473px;font-size:9.6px;line-height:11px;letter-spacing:1.06px;left:1005.1px;color:#2a2a2a;">09:45</div>
<div class="a v" style="top:473px;font-size:9.6px;line-height:11px;letter-spacing:1.06px;left:1071.1px;color:#2a2a2a;">10:45</div>
<div class="a v" style="top:473px;font-size:9.6px;line-height:11px;left:1137.1px;color:#2a2a2a;">T</div>
<div class="a v" style="top:473px;font-size:9.6px;line-height:11px;left:1217.3px;color:#2a2a2a;">1</div>
<div class="a v" style="top:473px;font-size:9.6px;line-height:11px;left:1412.3px;color:#2a2a2a;">1</div>
<div class="a v" style="top:473px;font-size:9.6px;line-height:11px;left:1477.1px;color:#2a2a2a;">0</div>
<div class="a v" style="top:473px;font-size:9.6px;line-height:11px;letter-spacing:0.54px;left:1575.1px;color:#2a2a2a;">01-Pending</div>
<div class="a v b" style="top:473px;font-size:9.6px;line-height:11px;left:1176.1px;color:#1c1c1c;">M</div>
<div class="a" style="left:7px;top:490px;width:1877px;height:24px;background:linear-gradient(#9a9a9a,#8d8d8d 50%,#7f7f7f);border-bottom:1px solid #6c6c6c"></div>
<div class="a" style="left:1170px;top:490px;width:40px;height:23px;background:#dcdcfa"></div>
<div class="a" style="left:1568px;top:490px;width:138px;height:23px;background:#c8c8c8"></div>
<div class="a v" style="top:497px;font-size:9.6px;line-height:11px;letter-spacing:0.87px;left:13.1px;color:#fff;">05/02/21-Sun</div>
<div class="a v" style="top:497px;font-size:9.6px;line-height:11px;letter-spacing:0.37px;left:291.1px;color:#fff;">Allen, Tim</div>
<div class="a v" style="top:497px;font-size:9.6px;line-height:11px;letter-spacing:1.03px;left:414.1px;color:#fff;">EL-0000007-PP</div>
<div class="a v" style="top:497px;font-size:9.6px;line-height:11px;letter-spacing:0.24px;left:586.1px;color:#fff;">Boston, Betty</div>
<div class="a v" style="top:497px;font-size:9.6px;line-height:11px;left:709.1px;color:#fff;">P</div>
<div class="a v" style="top:497px;font-size:9.6px;line-height:11px;letter-spacing:1.45px;left:750.1px;color:#fff;">HHA</div>
<div class="a v" style="top:497px;font-size:9.6px;line-height:11px;letter-spacing:1.45px;left:808.1px;color:#fff;">HHA</div>
<div class="a v" style="top:497px;font-size:9.6px;line-height:11px;letter-spacing:1.21px;left:882.1px;color:#fff;">DEF</div>
<div class="a v" style="top:497px;font-size:9.6px;line-height:11px;left:964.1px;color:#fff;">P</div>
<div class="a v" style="top:497px;font-size:9.6px;line-height:11px;letter-spacing:1.06px;left:1005.1px;color:#fff;">09:45</div>
<div class="a v" style="top:497px;font-size:9.6px;line-height:11px;letter-spacing:1.06px;left:1071.1px;color:#fff;">10:45</div>
<div class="a v" style="top:497px;font-size:9.6px;line-height:11px;left:1137.1px;color:#fff;">T</div>
<div class="a v" style="top:497px;font-size:9.6px;line-height:11px;left:1217.3px;color:#fff;">1</div>
<div class="a v" style="top:497px;font-size:9.6px;line-height:11px;left:1412.3px;color:#fff;">1</div>
<div class="a v" style="top:497px;font-size:9.6px;line-height:11px;left:1477.1px;color:#fff;">0</div>
<div class="a v" style="top:497px;font-size:9.6px;line-height:11px;letter-spacing:0.54px;left:1575.1px;color:#fff;">01-Pending</div>
<div class="a v b" style="top:497px;font-size:9.6px;line-height:11px;left:1176.1px;color:#f4f4ff;">M</div>
<div class="a" style="left:7px;top:514px;width:1877px;height:24px;background:linear-gradient(#9a9a9a,#8d8d8d 50%,#7f7f7f);border-bottom:1px solid #6c6c6c"></div>
<div class="a" style="left:1170px;top:514px;width:40px;height:23px;background:#dcdcfa"></div>
<div class="a" style="left:1568px;top:514px;width:138px;height:23px;background:#c8c8c8"></div>
<div class="a v" style="top:521px;font-size:9.6px;line-height:11px;letter-spacing:0.80px;left:13.1px;color:#fff;">05/05/21-Wed</div>
<div class="a v" style="top:521px;font-size:9.6px;line-height:11px;letter-spacing:0.37px;left:291.1px;color:#fff;">Allen, Tim</div>
<div class="a v" style="top:521px;font-size:9.6px;line-height:11px;letter-spacing:1.03px;left:414.1px;color:#fff;">EL-0000007-PP</div>
<div class="a v" style="top:521px;font-size:9.6px;line-height:11px;letter-spacing:0.24px;left:586.1px;color:#fff;">Boston, Betty</div>
<div class="a v" style="top:521px;font-size:9.6px;line-height:11px;left:709.1px;color:#fff;">P</div>
<div class="a v" style="top:521px;font-size:9.6px;line-height:11px;letter-spacing:1.45px;left:750.1px;color:#fff;">HHA</div>
<div class="a v" style="top:521px;font-size:9.6px;line-height:11px;letter-spacing:1.45px;left:808.1px;color:#fff;">HHA</div>
<div class="a v" style="top:521px;font-size:9.6px;line-height:11px;letter-spacing:1.21px;left:882.1px;color:#fff;">DEF</div>
<div class="a v" style="top:521px;font-size:9.6px;line-height:11px;left:964.1px;color:#fff;">P</div>
<div class="a v" style="top:521px;font-size:9.6px;line-height:11px;letter-spacing:1.06px;left:1005.1px;color:#fff;">09:45</div>
<div class="a v" style="top:521px;font-size:9.6px;line-height:11px;letter-spacing:1.06px;left:1071.1px;color:#fff;">10:45</div>
<div class="a v" style="top:521px;font-size:9.6px;line-height:11px;left:1137.1px;color:#fff;">T</div>
<div class="a v" style="top:521px;font-size:9.6px;line-height:11px;left:1217.3px;color:#fff;">1</div>
<div class="a v" style="top:521px;font-size:9.6px;line-height:11px;left:1412.3px;color:#fff;">1</div>
<div class="a v" style="top:521px;font-size:9.6px;line-height:11px;left:1477.1px;color:#fff;">0</div>
<div class="a v" style="top:521px;font-size:9.6px;line-height:11px;letter-spacing:0.54px;left:1575.1px;color:#fff;">01-Pending</div>
<div class="a v b" style="top:521px;font-size:9.6px;line-height:11px;left:1176.1px;color:#f4f4ff;">M</div>
<div class="a" style="left:7px;top:538px;width:1877px;height:24px;background:linear-gradient(#9a9a9a,#8d8d8d 50%,#7f7f7f);border-bottom:1px solid #6c6c6c"></div>
<div class="a" style="left:1170px;top:538px;width:40px;height:23px;background:#dcdcfa"></div>
<div class="a" style="left:1568px;top:538px;width:138px;height:23px;background:#c8c8c8"></div>
<div class="a v" style="top:545px;font-size:9.6px;line-height:11px;letter-spacing:0.87px;left:13.1px;color:#fff;">05/09/21-Sun</div>
<div class="a v" style="top:545px;font-size:9.6px;line-height:11px;letter-spacing:0.37px;left:291.1px;color:#fff;">Allen, Tim</div>
<div class="a v" style="top:545px;font-size:9.6px;line-height:11px;letter-spacing:1.03px;left:414.1px;color:#fff;">EL-0000007-PP</div>
<div class="a v" style="top:545px;font-size:9.6px;line-height:11px;letter-spacing:0.24px;left:586.1px;color:#fff;">Boston, Betty</div>
<div class="a v" style="top:545px;font-size:9.6px;line-height:11px;left:709.1px;color:#fff;">P</div>
<div class="a v" style="top:545px;font-size:9.6px;line-height:11px;letter-spacing:1.45px;left:750.1px;color:#fff;">HHA</div>
<div class="a v" style="top:545px;font-size:9.6px;line-height:11px;letter-spacing:1.45px;left:808.1px;color:#fff;">HHA</div>
<div class="a v" style="top:545px;font-size:9.6px;line-height:11px;letter-spacing:1.21px;left:882.1px;color:#fff;">DEF</div>
<div class="a v" style="top:545px;font-size:9.6px;line-height:11px;left:964.1px;color:#fff;">P</div>
<div class="a v" style="top:545px;font-size:9.6px;line-height:11px;letter-spacing:1.06px;left:1005.1px;color:#fff;">09:45</div>
<div class="a v" style="top:545px;font-size:9.6px;line-height:11px;letter-spacing:1.06px;left:1071.1px;color:#fff;">10:45</div>
<div class="a v" style="top:545px;font-size:9.6px;line-height:11px;left:1137.1px;color:#fff;">T</div>
<div class="a v" style="top:545px;font-size:9.6px;line-height:11px;left:1217.3px;color:#fff;">1</div>
<div class="a v" style="top:545px;font-size:9.6px;line-height:11px;left:1412.3px;color:#fff;">1</div>
<div class="a v" style="top:545px;font-size:9.6px;line-height:11px;left:1477.1px;color:#fff;">0</div>
<div class="a v" style="top:545px;font-size:9.6px;line-height:11px;letter-spacing:0.54px;left:1575.1px;color:#fff;">01-Pending</div>
<div class="a v b" style="top:545px;font-size:9.6px;line-height:11px;left:1176.1px;color:#f4f4ff;">M</div>
<div class="a" style="left:7px;top:562px;width:1877px;height:24px;background:linear-gradient(#9a9a9a,#8d8d8d 50%,#7f7f7f);border-bottom:1px solid #6c6c6c"></div>
<div class="a" style="left:1170px;top:562px;width:40px;height:23px;background:#dcdcfa"></div>
<div class="a" style="left:1568px;top:562px;width:138px;height:23px;background:#c8c8c8"></div>
<div class="a v" style="top:569px;font-size:9.6px;line-height:11px;letter-spacing:0.80px;left:13.1px;color:#fff;">05/12/21-Wed</div>
<div class="a v" style="top:569px;font-size:9.6px;line-height:11px;letter-spacing:0.37px;left:291.1px;color:#fff;">Allen, Tim</div>
<div class="a v" style="top:569px;font-size:9.6px;line-height:11px;letter-spacing:1.03px;left:414.1px;color:#fff;">EL-0000007-PP</div>
<div class="a v" style="top:569px;font-size:9.6px;line-height:11px;letter-spacing:0.24px;left:586.1px;color:#fff;">Boston, Betty</div>
<div class="a v" style="top:569px;font-size:9.6px;line-height:11px;left:709.1px;color:#fff;">P</div>
<div class="a v" style="top:569px;font-size:9.6px;line-height:11px;letter-spacing:1.45px;left:750.1px;color:#fff;">HHA</div>
<div class="a v" style="top:569px;font-size:9.6px;line-height:11px;letter-spacing:1.45px;left:808.1px;color:#fff;">HHA</div>
<div class="a v" style="top:569px;font-size:9.6px;line-height:11px;letter-spacing:1.21px;left:882.1px;color:#fff;">DEF</div>
<div class="a v" style="top:569px;font-size:9.6px;line-height:11px;left:964.1px;color:#fff;">P</div>
<div class="a v" style="top:569px;font-size:9.6px;line-height:11px;letter-spacing:1.06px;left:1005.1px;color:#fff;">09:45</div>
<div class="a v" style="top:569px;font-size:9.6px;line-height:11px;letter-spacing:1.06px;left:1071.1px;color:#fff;">10:45</div>
<div class="a v" style="top:569px;font-size:9.6px;line-height:11px;left:1137.1px;color:#fff;">T</div>
<div class="a v" style="top:569px;font-size:9.6px;line-height:11px;left:1217.3px;color:#fff;">1</div>
<div class="a v" style="top:569px;font-size:9.6px;line-height:11px;left:1412.3px;color:#fff;">1</div>
<div class="a v" style="top:569px;font-size:9.6px;line-height:11px;left:1477.1px;color:#fff;">0</div>
<div class="a v" style="top:569px;font-size:9.6px;line-height:11px;letter-spacing:0.54px;left:1575.1px;color:#fff;">01-Pending</div>
<div class="a v b" style="top:569px;font-size:9.6px;line-height:11px;left:1176.1px;color:#f4f4ff;">M</div>
<div class="a" style="left:7px;top:586px;width:1877px;height:24px;background:linear-gradient(#9a9a9a,#8d8d8d 50%,#7f7f7f);border-bottom:1px solid #6c6c6c"></div>
<div class="a" style="left:1170px;top:586px;width:40px;height:23px;background:#dcdcfa"></div>
<div class="a" style="left:1568px;top:586px;width:138px;height:23px;background:#c8c8c8"></div>
<div class="a v" style="top:593px;font-size:9.6px;line-height:11px;letter-spacing:0.87px;left:13.1px;color:#fff;">05/16/21-Sun</div>
<div class="a v" style="top:593px;font-size:9.6px;line-height:11px;letter-spacing:0.37px;left:291.1px;color:#fff;">Allen, Tim</div>
<div class="a v" style="top:593px;font-size:9.6px;line-height:11px;letter-spacing:1.03px;left:414.1px;color:#fff;">EL-0000007-PP</div>
<div class="a v" style="top:593px;font-size:9.6px;line-height:11px;letter-spacing:0.24px;left:586.1px;color:#fff;">Boston, Betty</div>
<div class="a v" style="top:593px;font-size:9.6px;line-height:11px;left:709.1px;color:#fff;">P</div>
<div class="a v" style="top:593px;font-size:9.6px;line-height:11px;letter-spacing:1.45px;left:750.1px;color:#fff;">HHA</div>
<div class="a v" style="top:593px;font-size:9.6px;line-height:11px;letter-spacing:1.45px;left:808.1px;color:#fff;">HHA</div>
<div class="a v" style="top:593px;font-size:9.6px;line-height:11px;letter-spacing:1.21px;left:882.1px;color:#fff;">DEF</div>
<div class="a v" style="top:593px;font-size:9.6px;line-height:11px;left:964.1px;color:#fff;">P</div>
<div class="a v" style="top:593px;font-size:9.6px;line-height:11px;letter-spacing:1.06px;left:1005.1px;color:#fff;">09:45</div>
<div class="a v" style="top:593px;font-size:9.6px;line-height:11px;letter-spacing:1.06px;left:1071.1px;color:#fff;">10:45</div>
<div class="a v" style="top:593px;font-size:9.6px;line-height:11px;left:1137.1px;color:#fff;">T</div>
<div class="a v" style="top:593px;font-size:9.6px;line-height:11px;left:1217.3px;color:#fff;">1</div>
<div class="a v" style="top:593px;font-size:9.6px;line-height:11px;left:1412.3px;color:#fff;">1</div>
<div class="a v" style="top:593px;font-size:9.6px;line-height:11px;left:1477.1px;color:#fff;">0</div>
<div class="a v" style="top:593px;font-size:9.6px;line-height:11px;letter-spacing:0.54px;left:1575.1px;color:#fff;">01-Pending</div>
<div class="a v b" style="top:593px;font-size:9.6px;line-height:11px;left:1176.1px;color:#f4f4ff;">M</div>
<div class="a" style="left:7px;top:610px;width:1877px;height:24px;background:linear-gradient(#9a9a9a,#8d8d8d 50%,#7f7f7f);border-bottom:1px solid #6c6c6c"></div>
<div class="a" style="left:1170px;top:610px;width:40px;height:23px;background:#dcdcfa"></div>
<div class="a" style="left:1568px;top:610px;width:138px;height:23px;background:#c8c8c8"></div>
<div class="a v" style="top:617px;font-size:9.6px;line-height:11px;letter-spacing:0.80px;left:13.1px;color:#fff;">05/19/21-Wed</div>
<div class="a v" style="top:617px;font-size:9.6px;line-height:11px;letter-spacing:0.37px;left:291.1px;color:#fff;">Allen, Tim</div>
<div class="a v" style="top:617px;font-size:9.6px;line-height:11px;letter-spacing:1.03px;left:414.1px;color:#fff;">EL-0000007-PP</div>
<div class="a v" style="top:617px;font-size:9.6px;line-height:11px;letter-spacing:0.24px;left:586.1px;color:#fff;">Boston, Betty</div>
<div class="a v" style="top:617px;font-size:9.6px;line-height:11px;left:709.1px;color:#fff;">P</div>
<div class="a v" style="top:617px;font-size:9.6px;line-height:11px;letter-spacing:1.45px;left:750.1px;color:#fff;">HHA</div>
<div class="a v" style="top:617px;font-size:9.6px;line-height:11px;letter-spacing:1.45px;left:808.1px;color:#fff;">HHA</div>
<div class="a v" style="top:617px;font-size:9.6px;line-height:11px;letter-spacing:1.21px;left:882.1px;color:#fff;">DEF</div>
<div class="a v" style="top:617px;font-size:9.6px;line-height:11px;left:964.1px;color:#fff;">P</div>
<div class="a v" style="top:617px;font-size:9.6px;line-height:11px;letter-spacing:1.06px;left:1005.1px;color:#fff;">09:45</div>
<div class="a v" style="top:617px;font-size:9.6px;line-height:11px;letter-spacing:1.06px;left:1071.1px;color:#fff;">10:45</div>
<div class="a v" style="top:617px;font-size:9.6px;line-height:11px;left:1137.1px;color:#fff;">T</div>
<div class="a v" style="top:617px;font-size:9.6px;line-height:11px;left:1217.3px;color:#fff;">1</div>
<div class="a v" style="top:617px;font-size:9.6px;line-height:11px;left:1412.3px;color:#fff;">1</div>
<div class="a v" style="top:617px;font-size:9.6px;line-height:11px;left:1477.1px;color:#fff;">0</div>
<div class="a v" style="top:617px;font-size:9.6px;line-height:11px;letter-spacing:0.54px;left:1575.1px;color:#fff;">01-Pending</div>
<div class="a v b" style="top:617px;font-size:9.6px;line-height:11px;left:1176.1px;color:#f4f4ff;">M</div>
<div class="a" style="left:8px;top:634px;width:1875px;height:24px;background:#f2f2f2"></div>
<div class="a" style="left:1170px;top:634px;width:40px;height:23px;background:#dcdcfa"></div>
<div class="a" style="left:1568px;top:634px;width:138px;height:23px;background:#c8c8c8"></div>
<div class="a v" style="top:641px;font-size:9.6px;line-height:11px;letter-spacing:0.87px;left:13.1px;color:#2a2a2a;">05/23/21-Sun</div>
<div class="a v" style="top:641px;font-size:9.6px;line-height:11px;letter-spacing:0.37px;left:291.1px;color:#2a2a2a;">Allen, Tim</div>
<div class="a v" style="top:641px;font-size:9.6px;line-height:11px;letter-spacing:1.03px;left:414.1px;color:#2a2a2a;">EL-0000007-PP</div>
<div class="a v" style="top:641px;font-size:9.6px;line-height:11px;letter-spacing:0.24px;left:586.1px;color:#2a2a2a;">Boston, Betty</div>
<div class="a v" style="top:641px;font-size:9.6px;line-height:11px;left:709.1px;color:#2a2a2a;">P</div>
<div class="a v" style="top:641px;font-size:9.6px;line-height:11px;letter-spacing:1.45px;left:750.1px;color:#2a2a2a;">HHA</div>
<div class="a v" style="top:641px;font-size:9.6px;line-height:11px;letter-spacing:1.45px;left:808.1px;color:#2a2a2a;">HHA</div>
<div class="a v" style="top:641px;font-size:9.6px;line-height:11px;letter-spacing:1.21px;left:882.1px;color:#2a2a2a;">DEF</div>
<div class="a v" style="top:641px;font-size:9.6px;line-height:11px;left:964.1px;color:#2a2a2a;">P</div>
<div class="a v" style="top:641px;font-size:9.6px;line-height:11px;letter-spacing:1.06px;left:1005.1px;color:#2a2a2a;">09:45</div>
<div class="a v" style="top:641px;font-size:9.6px;line-height:11px;letter-spacing:1.06px;left:1071.1px;color:#2a2a2a;">10:45</div>
<div class="a v" style="top:641px;font-size:9.6px;line-height:11px;left:1137.1px;color:#2a2a2a;">T</div>
<div class="a v" style="top:641px;font-size:9.6px;line-height:11px;left:1217.3px;color:#2a2a2a;">1</div>
<div class="a v" style="top:641px;font-size:9.6px;line-height:11px;left:1412.3px;color:#2a2a2a;">1</div>
<div class="a v" style="top:641px;font-size:9.6px;line-height:11px;left:1477.1px;color:#2a2a2a;">0</div>
<div class="a v" style="top:641px;font-size:9.6px;line-height:11px;letter-spacing:0.54px;left:1575.1px;color:#2a2a2a;">01-Pending</div>
<div class="a v b" style="top:641px;font-size:9.6px;line-height:11px;left:1176.1px;color:#1c1c1c;">M</div>
<div class="a" style="left:1170px;top:658px;width:40px;height:23px;background:#dcdcfa"></div>
<div class="a" style="left:1568px;top:658px;width:138px;height:23px;background:#c8c8c8"></div>
<div class="a v" style="top:665px;font-size:9.6px;line-height:11px;letter-spacing:0.80px;left:13.1px;color:#2a2a2a;">05/26/21-Wed</div>
<div class="a v" style="top:665px;font-size:9.6px;line-height:11px;letter-spacing:0.37px;left:291.1px;color:#2a2a2a;">Allen, Tim</div>
<div class="a v" style="top:665px;font-size:9.6px;line-height:11px;letter-spacing:1.03px;left:414.1px;color:#2a2a2a;">EL-0000007-PP</div>
<div class="a v" style="top:665px;font-size:9.6px;line-height:11px;letter-spacing:0.24px;left:586.1px;color:#2a2a2a;">Boston, Betty</div>
<div class="a v" style="top:665px;font-size:9.6px;line-height:11px;left:709.1px;color:#2a2a2a;">P</div>
<div class="a v" style="top:665px;font-size:9.6px;line-height:11px;letter-spacing:1.45px;left:750.1px;color:#2a2a2a;">HHA</div>
<div class="a v" style="top:665px;font-size:9.6px;line-height:11px;letter-spacing:1.45px;left:808.1px;color:#2a2a2a;">HHA</div>
<div class="a v" style="top:665px;font-size:9.6px;line-height:11px;letter-spacing:1.21px;left:882.1px;color:#2a2a2a;">DEF</div>
<div class="a v" style="top:665px;font-size:9.6px;line-height:11px;left:964.1px;color:#2a2a2a;">P</div>
<div class="a v" style="top:665px;font-size:9.6px;line-height:11px;letter-spacing:1.06px;left:1005.1px;color:#2a2a2a;">09:45</div>
<div class="a v" style="top:665px;font-size:9.6px;line-height:11px;letter-spacing:1.06px;left:1071.1px;color:#2a2a2a;">10:45</div>
<div class="a v" style="top:665px;font-size:9.6px;line-height:11px;left:1137.1px;color:#2a2a2a;">T</div>
<div class="a v" style="top:665px;font-size:9.6px;line-height:11px;left:1217.3px;color:#2a2a2a;">1</div>
<div class="a v" style="top:665px;font-size:9.6px;line-height:11px;left:1412.3px;color:#2a2a2a;">1</div>
<div class="a v" style="top:665px;font-size:9.6px;line-height:11px;left:1477.1px;color:#2a2a2a;">0</div>
<div class="a v" style="top:665px;font-size:9.6px;line-height:11px;letter-spacing:0.54px;left:1575.1px;color:#2a2a2a;">01-Pending</div>
<div class="a v b" style="top:665px;font-size:9.6px;line-height:11px;left:1176.1px;color:#1c1c1c;">M</div>
<div class="a win"></div>
</body></html>
